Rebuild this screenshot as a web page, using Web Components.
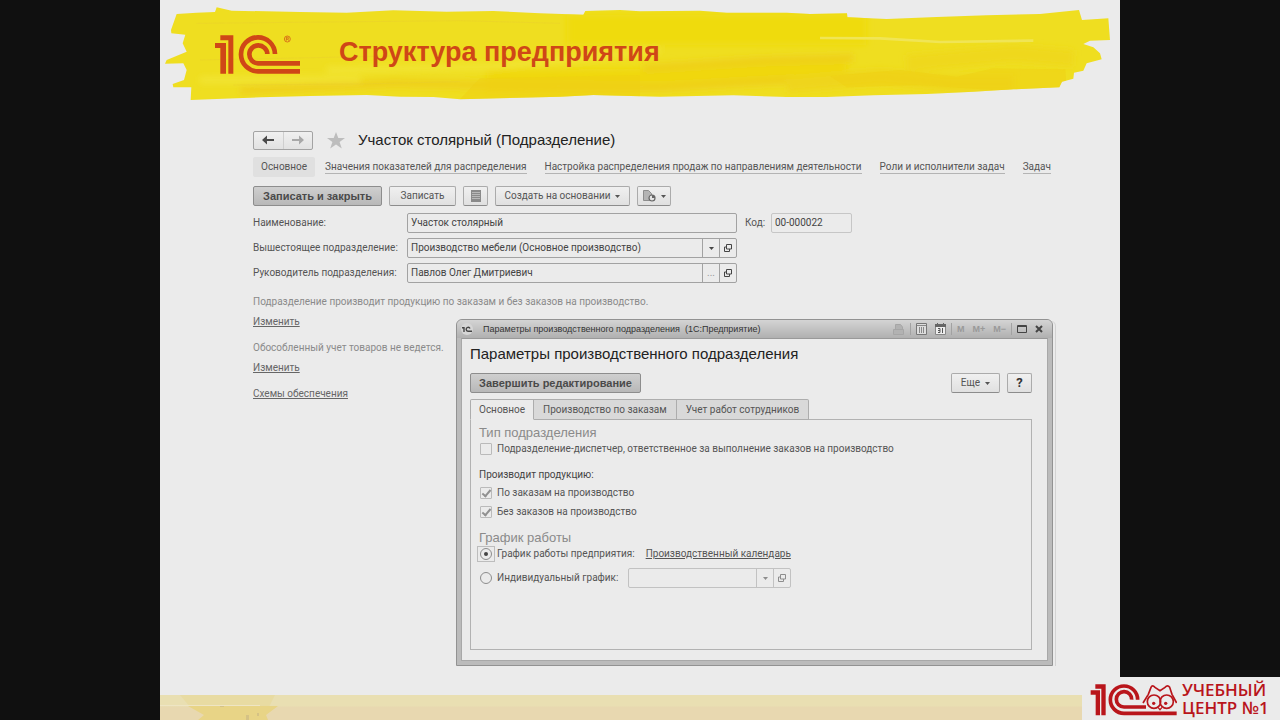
<!DOCTYPE html>
<html lang="ru">
<head>
<meta charset="utf-8">
<title>Структура предприятия</title>
<style>
  html, body { margin: 0; min-height: 100%; }
  body { background: #101010; color: #555; font: 10px/12px Roboto, "Liberation Sans", Arial, sans-serif; }
</style>
</head>
<body>
<training-slide>
  <slide-banner slot="banner">Структура предприятия</slide-banner>
  <department-form></department-form>
</training-slide>

<script>
const sheet = `
  *, *::before { box-sizing: border-box; }
  [hidden] { display: none !important; }
  svg { display: block; flex: none; }
  a { color: inherit; }
  button, input { font: inherit; color: inherit; margin: 0; }
  h1, h2, h3, h4 { font-family: "Liberation Sans", Arial, sans-serif; }
`;
function define(name, html, setup) {
  customElements.define(name, class extends HTMLElement {
    constructor() {
      super();
      const root = this.attachShadow({ mode: "open" });
      root.innerHTML = `<style>${sheet}</style>` + (typeof html === "function" ? html(this) : html);
      if (setup) setup(this, root);
    }
  });
}

/* Glyphs shared by the form and the window */
const icons = {
  back: '<svg width="12" height="10" viewBox="0 0 12 10"><path fill="none" stroke="#4a4a4a" stroke-width="2" d="M12 5H3"/><path fill="#4a4a4a" d="M0 5l5-4.500v3L4 5l1 1.500v3z"/></svg>',
  next: '<svg width="12" height="10" viewBox="0 0 12 10"><path fill="none" stroke="#a8a8a8" stroke-width="2" d="M0 5h9"/><path fill="#a8a8a8" d="M12 5L7 .5v3L8 5 7 6.500v3z"/></svg>',
  star: '<svg width="18" height="17" viewBox="0 0 18 17" fill="#bdbdbd"><path d="M9 0l2.300 6H18l-5.400 4 2.200 6.500L9 12.600 3.200 16.500 5.400 10 0 6h6.700z"/></svg>',
  list: '<svg width="10" height="12" viewBox="0 0 10 12"><path fill="#8a8a8a" d="M0 0h10v12H0z"/><path stroke="#b8b8b8" d="M1 2.500h8M1 4.500h8M1 6.500h8M1 8.500h8"/></svg>',
  report: '<svg width="13" height="12" viewBox="0 0 13 12"><path fill="#b4b4b4" stroke="#8d8d8d" d="M.5.5h5l3 3v7h-8z"/><circle cx="9" cy="8" r="3" fill="#e4e4e4" stroke="#666" stroke-width="1.200"/><path d="M9 8V5a3 3 0 0 1 3 3z" fill="#666"/></svg>',
  down: '<svg width="5" height="3" viewBox="0 0 5 3"><path fill="currentColor" d="M0 0h5L2.500 3z"/></svg>',
  open: '<svg width="8" height="8" viewBox="0 0 8 8" fill="none" stroke="currentColor"><path d="M2.500.5h5v4.500h-5zM2.500 3h-2v4.500h5V5"/></svg>'
};

/* The doubled "1" of the 1C mark */
const oneMark = '<path fill="currentColor" d="M16 0h39v115H40V15H16zM0 23h33v92H16V38H0z"/>';

define("training-slide", `
  <style>
    :host { display: block; position: relative; min-height: 100vh; }
    .sheet { display: flex; flex-direction: column; width: 75%; min-height: 100vh; margin: 0 auto; background: #ebebeb; }
    main { flex: 1; padding: 20px 64px 28px 93px; }
    uc-badge { position: absolute; right: 0; bottom: 0; }
  </style>
  <div class="sheet">
    <slot name="banner"></slot>
    <main><slot></slot></main>
    <slide-footer></slide-footer>
  </div>
  <uc-badge></uc-badge>`);

define("slide-banner", `
  <style>
    :host { display: flex; position: relative; height: 110px; align-items: flex-start; color: #cf4717; }
    .paint { position: absolute; inset: 0; width: 100%; height: 100%; }
    .mark { position: relative; margin: 35px 39px 0 55px; }
    h1 { position: relative; margin: 36px 0 0; font-size: 27px; line-height: 32px; font-weight: bold; }
  </style>
  <svg class="paint" viewBox="0 0 2880 330" preserveAspectRatio="none">
    <defs>
      <filter id="soft" x="-5%" y="-50%" width="110%" height="200%"><feGaussianBlur stdDeviation="9"/></filter>
      <clipPath id="edge"><path id="b" d="M50 42L110 38 165 36 170 22 215 32 420 36 560 38 700 31 860 35 1000 33 1140 40 1270 44 1276 33 1380 30 1440 34 1620 32 1700 38 1880 38 1950 42 2061 40 2062 52 2180 57 2330 51 2480 46 2640 42 2757 30 2766 60 2845 55 2850 120 2790 122 2770 132 2800 142 2820 160 2825 178 2780 190 2770 212 2742 218 2740 236 2706 245 2698 262 2560 268 2440 275 2300 282 2140 286 2000 291 1880 291 1720 286 1500 290 1300 285 1200 290 900 298 820 291 720 290 620 285 450 288 300 292 150 298 92 300 94 262 40 262 38 252 72 240 80 210 70 190 15 191 20 180 80 155 68 130 76 104 34 100 33 90z"/></clipPath>
    </defs>
    <use href="#b" fill="#efde20"/>
    <g clip-path="url(#edge)">
      <g filter="url(#soft)" fill="none">
        <path stroke="#efdb08" stroke-width="90" d="M1220 90H2120"/>
        <path stroke="#f0d808" stroke-width="70" d="M980 245L1500 240 2060 205"/>
        <path stroke="#efd01a" stroke-width="24" d="M240 272L700 250 960 255 1500 262 1900 240M1450 205L1800 182 2080 174"/>
        <path stroke="#efd51c" stroke-width="45" d="M1880 255L2160 230 2360 250 2560 250"/>
        <path stroke="#f2e535" stroke-width="18" d="M500 210L1000 200 1500 150M120 240L600 238"/>
        <path stroke="#efd81c" stroke-width="50" d="M2240 190L2560 160 2740 175"/>
      </g>
      <path fill="#f0cf12" opacity=".5" d="M900 298L960 235 1440 225 1440 290zM2010 228L2220 210 2390 230 2500 205 2716 208 2720 268 2500 270 2280 255 2060 262z"/>
      <path stroke="#f0e555" stroke-width="8" fill="none" d="M1980 114L2160 115 2340 126 2620 122"/>
      <path stroke="#e9cd30" stroke-width="3" fill="none" opacity=".4" d="M110 70L900 62 1200 70M120 180L700 168M220 255L600 252 900 245"/>
    </g>
  </svg>
  <svg class="mark" width="85" height="39" viewBox="0 -1 255 117" role="img" aria-label="1С">
    ${oneMark}
    <g fill="none" stroke="currentColor" stroke-width="14"><path d="M180 56A51 51 0 1 0 129 108H255M157 56A27 27 0 1 0 129 84H255"/></g>
    <circle cx="217" cy="11" r="9" fill="none" stroke="currentColor" stroke-width="2"/>
    <path d="M214 16V6h4a2.500 2.500 0 0 1 0 5h-4M218 11l3 5" fill="none" stroke="currentColor" stroke-width="2"/>
  </svg>
  <h1><slot></slot></h1>`);

define("slide-footer", `
  <style>
    :host { display: block; height: 25px; background: linear-gradient(#e9dfb2 0 11px, #e8d8b0 12px); }
    svg { width: 120px; height: 25px; }
  </style>
  <svg viewBox="0 0 120 25"><path fill="#e8dba2" d="M20 0h95l-6 12H30z"/><path fill="#e8d486" d="M28 11H118L106 20 108 25H38L44 20z"/><path stroke="#eee5c4" d="M0 10.500h100"/><path fill="#d5c285" d="M60 11h4v1h-4zM86 20h3v5h-3zM97 18h2v3h-2z"/></svg>`);

define("uc-badge", `
  <style>
    :host { display: flex; box-sizing: border-box; width: 198px; height: 43px; padding: 5px 9px 0 8px; gap: 5px; background: #ebebeb; color: #b9151b; }
    p { margin: -1px 0 0; font: 600 17px/18px "Open Sans", "Noto Sans", sans-serif; white-space: nowrap; }
  </style>
  <svg width="87" height="34" viewBox="150 68 261 102" role="img" aria-label="1С">
    <path fill="currentColor" d="M166 75h31v93h-13V88h-18zM152 93h28v75h-13v-62h-15z"/>
    <g fill="none" stroke="currentColor">
      <path stroke-width="11" d="M293 121A41 41 0 1 0 252 162H410M275 121A23 23 0 1 0 252 143H318"/>
      <path stroke-width="5" d="M309 131L325 105 333 84Q337 75 345 84L360 94 375 84Q383 75 389 84L396 105 410 131"/>
      <circle cx="342" cy="127" r="20" stroke-width="5"/><circle cx="380" cy="127" r="20" stroke-width="5"/>
      <path stroke-width="4" d="M354 144l6 7 6-7"/>
    </g>
    <circle cx="341" cy="132" r="5" fill="currentColor"/><circle cx="377" cy="132" r="5" fill="currentColor"/>
  </svg>
  <p>УЧЕБНЫЙ<br>ЦЕНТР №1</p>`);

/* Push button: text, an optional icon attribute, "menu" adds the arrow */
define("push-button", `
  <style>
    :host { display: block; }
    button { display: flex; align-items: center; justify-content: center; gap: 5px; width: 100%; height: 20px; padding: 0 8px;
      border: 1px solid #ababab; border-bottom-color: #8c8c8c; border-radius: 2px; background: linear-gradient(#f0f0f0, #e0e0e0); white-space: nowrap; }
    :host([primary]) button { background: linear-gradient(#cfcfcf, #b8b8b8); border-color: #8d8d8d; color: #4a4a4a; font-weight: bold; font-size: 11px; font-family: "Liberation Sans", Arial, sans-serif; }
    :host([strong]) button { font-weight: bold; font-size: 13px; color: #333; }
    :host([compact]) button { padding: 0 5px; }
  </style>
  <button type="button"><span class="i" hidden></span><slot></slot><span class="m" hidden>${icons.down}</span></button>`,
  (el, root) => {
    const i = el.getAttribute("icon");
    if (i) { const s = root.querySelector(".i"); s.innerHTML = icons[i]; s.hidden = false; root.querySelector("button").setAttribute("aria-label", el.getAttribute("label") || ""); }
    if (el.hasAttribute("menu")) root.querySelector(".m").hidden = false;
  });

/* Labelled input with optional pick and open buttons */
define("entry-field", el => `
  <style>
    :host { display: flex; align-items: center; height: 20px; }
    label { flex: none; width: var(--label, auto); white-space: nowrap; }
    .box { display: flex; flex: 1; min-width: 0; height: 20px; border: 1px solid #a2a2a2; border-radius: 2px; color: #444; }
    input { flex: 1; min-width: 0; width: 0; padding: 0 3px; border: 0; background: none; outline: 0; }
    button { display: grid; place-items: center; width: 17px; padding: 0; border: 0; border-left: 1px solid #a2a2a2; background: none; }
    :host([quiet]) .box { border-color: #c6c6c6; }
    :host([faint]) .box { border-color: #c2c2c2; color: #8d8d8d; }
    :host([faint]) button { border-color: #c2c2c2; }
    .dots { color: #999; }
  </style>
  ${el.getAttribute("label") ? `<label for="v">${el.getAttribute("label")}</label>` : ""}
  <div class="box"><input id="v" value="${el.getAttribute("value") || ""}" ${el.getAttribute("label") ? "" : `aria-label="${el.getAttribute("name")}"`}>
  ${el.getAttribute("pick") === "list" ? `<button type="button" aria-label="Выбрать из списка">${icons.down}</button>` : ""}
  ${el.getAttribute("pick") === "dots" ? `<button type="button" class="dots" aria-label="Выбрать">...</button>` : ""}
  ${el.hasAttribute("pick") ? `<button type="button" aria-label="Открыть">${icons.open}</button>` : ""}</div>`);

define("check-row", el => `
  <style>
    :host { display: flex; height: 16px; align-items: center; }
    .ring { display: grid; place-items: center; width: 18px; height: 16px; margin: 0 2px 0 -2px; }
    :host([focused]) .ring { border: 1px solid #bdbdbd; }
    input { appearance: none; display: grid; place-items: center; width: 12px; height: 12px; border: 1px solid #bababa; border-radius: 1px; }
    input[type=radio] { border-radius: 50%; border-color: #8d8d8d; }
    input[type=radio]:checked::before { content: ""; width: 4px; height: 4px; border-radius: 50%; background: #444; }
    input[type=checkbox]:checked::before { content: ""; width: 9px; height: 5px; border: solid #909090; border-width: 0 0 2px 2px; transform: translateY(-1px) rotate(-50deg); }
  </style>
  <span class="ring"><input id="c" type="${el.getAttribute("type") || "checkbox"}" ${el.hasAttribute("checked") ? "checked" : ""}></span>
  <label for="c"><slot></slot></label>`);

define("department-form", `
  <style>
    :host { display: block; position: relative; }
    .head { display: flex; align-items: center; height: 20px; gap: 14px; }
    .history { display: flex; width: 60px; height: 19px; border: 1px solid #a3a3a3; border-radius: 2px; background: linear-gradient(#f0f0f0, #e2e2e2); }
    .history button { display: grid; place-items: center; flex: 1; padding: 0; border: 0; background: none; }
    .history button + button { border-left: 1px solid #cfcfcf; }
    .star { padding: 0; border: 0; background: none; }
    h2 { margin: 0 0 0 -1px; font-size: 15px; line-height: 20px; font-weight: normal; color: #222; }
    nav { display: flex; align-items: center; height: 20px; margin-top: 7px; gap: 18px; overflow: hidden; white-space: nowrap; }
    nav a { text-decoration: none; border-bottom: 1px solid #b4b4b4; line-height: 12px; }
    nav a[aria-current] { border: 0; padding: 0 8px; line-height: 20px; background: #e0e0e0; border-radius: 2px; margin-right: -8px; }
    .bar { display: flex; gap: 7px; margin-top: 9px; }
    .save { width: 129px; } .write { width: 67px; } .list { width: 25px; } .create { width: 135px; } .report { width: 34px; }
    .fields { display: grid; gap: 5px; margin-top: 7px; --label: 154px; }
    .line { display: flex; gap: 8px; }
    .main { width: 484px; }
    .code { width: 107px; --label: 26px; }
    .notes { display: flex; flex-direction: column; align-items: flex-start; margin-top: 11px; }
    .notes p { margin: 0; height: 20px; line-height: 16px; color: #8a8a8a; }
    .notes a { height: 16px; line-height: 16px; margin: 0 0 10px; color: #666; }
    param-window { position: absolute; left: 203px; right: 3px; top: 189px; }
  </style>
  <div class="head">
    <div class="history"><button type="button" aria-label="Назад">${icons.back}</button><button type="button" aria-label="Вперед">${icons.next}</button></div>
    <button type="button" class="star" aria-label="Избранное">${icons.star}</button>
    <h2>Участок столярный (Подразделение)</h2>
  </div>
  <nav><a href="#" aria-current="page">Основное</a><a href="#">Значения показателей для распределения</a><a href="#">Настройка распределения продаж по направлениям деятельности</a><a href="#">Роли и исполнители задач</a><a href="#">Задач</a></nav>
  <div class="bar">
    <push-button class="save" primary>Записать и закрыть</push-button>
    <push-button class="write">Записать</push-button>
    <push-button class="list" icon="list" label="Список" compact></push-button>
    <push-button class="create" menu>Создать на основании</push-button>
    <push-button class="report" icon="report" label="Отчеты" menu compact></push-button>
  </div>
  <div class="fields">
    <div class="line"><entry-field class="main" label="Наименование:" value="Участок столярный"></entry-field><entry-field class="code" label="Код:" value="00-000022" quiet></entry-field></div>
    <entry-field class="main" label="Вышестоящее подразделение:" value="Производство мебели (Основное производство)" pick="list"></entry-field>
    <entry-field class="main" label="Руководитель подразделения:" value="Павлов Олег Дмитриевич" pick="dots"></entry-field>
  </div>
  <div class="notes">
    <p>Подразделение производит продукцию по заказам и без заказов на производство.</p>
    <a href="#">Изменить</a>
    <p>Обособленный учет товаров не ведется.</p>
    <a href="#">Изменить</a>
    <a href="#">Схемы обеспечения</a>
  </div>
  <param-window></param-window>`);

define("window-tools", `
  <style>
    :host { display: flex; align-items: center; height: 16px; gap: 8px; color: #999; font: bold 9px "Liberation Sans", Arial, sans-serif; }
    button { display: grid; place-items: center; height: 14px; padding: 0; border: 0; background: none; }
    i { width: 1px; height: 12px; margin: 0 -3px; background: #a2a2a2; }
  </style>
  <button aria-label="Печать"><svg width="12" height="11" viewBox="0 0 12 11"><path fill="#b2b2b2" stroke="#a6a6a6" d="M2.500 5V.5h5L9.500 3v2M.5 5.500h10v5H.5z"/></svg></button>
  <i></i>
  <button aria-label="Калькулятор"><svg width="11" height="12" viewBox="0 0 11 12"><path fill="#ddd" stroke="#777" d="M.5.5h10v11H.5z"/><path stroke="#888" d="M1 2.500h9M3.500 4v6M5.500 4v6M7.500 4v6"/></svg></button>
  <button aria-label="Календарь"><svg width="11" height="12" viewBox="0 0 11 12"><path fill="#eee" stroke="#888" d="M.5 1.500h10v10H.5z"/><path fill="#666" d="M0 1h11v3H0zM2 0h1v2H2zM8 0h1v2H8z"/><path fill="none" stroke="#555" d="M3 5.500h2v4H3M3 7.500h2M7.500 5v5"/></svg></button>
  <i></i>
  <button>M</button><button>M+</button><button>M−</button>
  <i></i>
  <button aria-label="Развернуть"><svg width="10" height="8" viewBox="0 0 10 8"><path fill="none" stroke="#444" d="M.5.5h9v7h-9zM0 1.500h10"/></svg></button>
  <button aria-label="Закрыть"><svg width="8" height="8" viewBox="0 0 8 8"><path stroke="#444" stroke-width="2" d="M1 1l6 6M7 1L1 7"/></svg></button>`);

define("param-window", `
  <style>
    :host { display: block; border: 1px solid #929292; border-radius: 6px 6px 0 0; background: #bbb; padding: 0 4px 4px; box-shadow: 3px 1px 0 -1px #ebebeb, 4px 1px 0 -1px #d3d3d3; }
    header { display: flex; align-items: center; height: 18px; margin: 0 -4px; padding: 0 9px 0 4px; border-radius: 5px 5px 0 0; background: linear-gradient(#d4d4d4, #b0b0b0); color: #333; font: 9px "Liberation Sans", Arial, sans-serif; white-space: pre; }
    header span { flex: 1; margin-left: 10px; }
    .body { display: flex; flex-direction: column; box-sizing: border-box; min-height: 323px; padding: 5px 15px 10px 8px; border: 1px solid #a8a8a8; border-top-color: #999; background: #ebebeb; }
    h3 { margin: 0; font-size: 15px; line-height: 20px; font-weight: normal; color: #222; }
    .bar { display: flex; gap: 7px; margin-top: 9px; }
    .done { width: 171px; margin-right: auto; } .more { width: 49px; } .help { width: 25px; }
    .tabs { display: flex; position: relative; z-index: 1; margin: 6px 0 -1px; }
    .tabs button { height: 21px; padding: 0 9px; border: 1px solid #adadad; border-left: 0; background: #d9d9d9; white-space: nowrap; }
    .tabs button:first-child { padding: 0 8px; border-left: 1px solid #adadad; border-bottom-color: #ebebeb; background: #ebebeb; border-radius: 2px 0 0; }
    .tabs button:last-child { border-radius: 0 2px 0 0; }
    .panel { flex: 1; border: 1px solid #b2b2b2; padding: 5px 8px; }
    h4 { margin: 0; font-size: 13px; line-height: 16px; font-weight: normal; color: #8a8a8a; }
    p { margin: 12px 0 4px; line-height: 12px; color: #444; }
    check-row + check-row { margin-top: 3px; }
    .work { margin-top: 10px; }
    .opt { display: flex; align-items: center; height: 16px; }
    .opt a { color: #555; margin-left: 11px; }
    .opt + .opt { margin-top: 8px; }
    .opt entry-field { width: 163px; margin-left: 10px; }
  </style>
  <header><svg width="12" height="12" viewBox="0 0 12 12"><circle cx="6" cy="6" r="6" fill="#d6d6d6"/><path fill="none" stroke="#444" stroke-width="1.400" d="M1 4.700h2V9M9 5.500A2 2 0 1 0 7 8.300h4"/></svg><span>Параметры производственного подразделения  (1С:Предприятие)</span><window-tools></window-tools></header>
  <div class="body">
    <h3>Параметры производственного подразделения</h3>
    <div class="bar">
      <push-button class="done" primary>Завершить редактирование</push-button>
      <push-button class="more" menu>Еще</push-button>
      <push-button class="help" strong compact>?</push-button>
    </div>
    <div class="tabs" role="tablist"><button role="tab" aria-selected="true">Основное</button><button role="tab">Производство по заказам</button><button role="tab">Учет работ сотрудников</button></div>
    <div class="panel" role="tabpanel">
      <h4>Тип подразделения</h4>
      <check-row>Подразделение-диспетчер, ответственное за выполнение заказов на производство</check-row>
      <p>Производит продукцию:</p>
      <check-row checked>По заказам на производство</check-row>
      <check-row checked>Без заказов на производство</check-row>
      <h4 class="work">График работы</h4>
      <div class="opt"><check-row type="radio" checked focused>График работы предприятия:</check-row><a href="#">Производственный календарь</a></div>
      <div class="opt"><check-row type="radio">Индивидуальный график:</check-row><entry-field name="Индивидуальный график" pick="list" faint></entry-field></div>
    </div>
  </div>`);
</script>
</body>
</html>
